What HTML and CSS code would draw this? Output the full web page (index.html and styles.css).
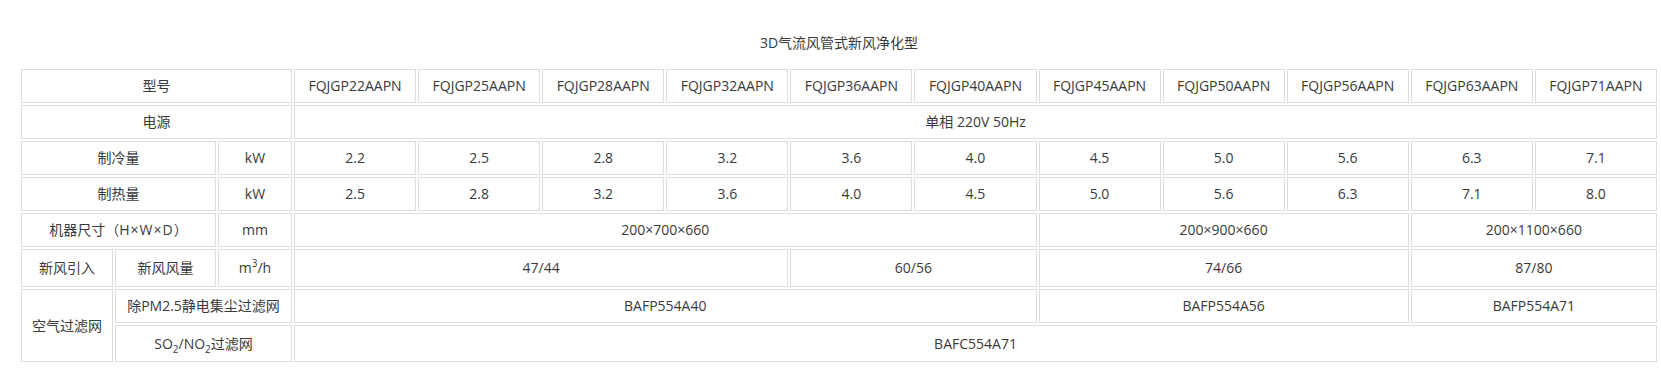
FILE: index.html
```html
<!DOCTYPE html>
<html lang="zh-CN">
<head>
<meta charset="utf-8">
<title>3D气流风管式新风净化型</title>
<link rel="stylesheet" href="styles.css">
</head>
<body>
<div class="page">
  <p class="title">3D气流风管式新风净化型</p>
  <table class="spec">
    <colgroup>
      <col class="c-a"><col class="c-b"><col class="c-c">
      <col><col><col><col><col><col><col><col><col><col><col>
    </colgroup>
    <tbody>
      <tr>
        <td colspan="3">型号</td>
        <td>FQJGP22AAPN</td><td>FQJGP25AAPN</td><td>FQJGP28AAPN</td><td>FQJGP32AAPN</td>
        <td>FQJGP36AAPN</td><td>FQJGP40AAPN</td><td>FQJGP45AAPN</td><td>FQJGP50AAPN</td>
        <td>FQJGP56AAPN</td><td>FQJGP63AAPN</td><td>FQJGP71AAPN</td>
      </tr>
      <tr>
        <td colspan="3">电源</td>
        <td colspan="11">单相 220V 50Hz</td>
      </tr>
      <tr>
        <td colspan="2">制冷量</td><td>kW</td>
        <td>2.2</td><td>2.5</td><td>2.8</td><td>3.2</td><td>3.6</td><td>4.0</td>
        <td>4.5</td><td>5.0</td><td>5.6</td><td>6.3</td><td>7.1</td>
      </tr>
      <tr>
        <td colspan="2">制热量</td><td>kW</td>
        <td>2.5</td><td>2.8</td><td>3.2</td><td>3.6</td><td>4.0</td><td>4.5</td>
        <td>5.0</td><td>5.6</td><td>6.3</td><td>7.1</td><td>8.0</td>
      </tr>
      <tr>
        <td colspan="2">机器尺寸（<span class="dims">H×W×D</span>）</td><td>mm</td>
        <td colspan="6">200×700×660</td>
        <td colspan="3">200×900×660</td>
        <td colspan="2">200×1100×660</td>
      </tr>
      <tr class="r-air">
        <td>新风引入</td><td>新风风量</td><td>m<sup>3</sup>/h</td>
        <td colspan="4">47/44</td>
        <td colspan="2">60/56</td>
        <td colspan="3">74/66</td>
        <td colspan="2">87/80</td>
      </tr>
      <tr>
        <td rowspan="2" class="c-span">空气过滤网</td>
        <td colspan="2">除PM2.5静电集尘过滤网</td>
        <td colspan="6">BAFP554A40</td>
        <td colspan="3">BAFP554A56</td>
        <td colspan="2">BAFP554A71</td>
      </tr>
      <tr class="r-so">
        <td colspan="2">SO<sub>2</sub>/NO<sub>2</sub>过滤网</td>
        <td colspan="11">BAFC554A71</td>
      </tr>
    </tbody>
  </table>
</div>
</body>
</html>
```
FILE: styles.css
```css
html, body {
  margin: 0;
  padding: 0;
  background: #ffffff;
}

.page {
  padding: 33px 0 0 19px;
  font-family: "Open Sans", "Noto Sans CJK SC", sans-serif;
  color: #3a3a3a;
}

.title {
  width: 1640px;
  margin: 0 0 14px 0;
  font-size: 14px;
  line-height: 20px;
  text-align: center;
}

.spec {
  width: 1640px;
  table-layout: fixed;
  border-collapse: separate;
  border-spacing: 2px;
  font-size: 14px;
}

.spec col.c-a { width: 92px; }
.spec col.c-b { width: 101px; }
.spec col.c-c { width: 74px; }

.spec td {
  box-sizing: border-box;
  height: 34px;
  padding: 0;
  border: 1px solid #dddddd;
  text-align: center;
  vertical-align: middle;
  white-space: nowrap;
  line-height: 20px;
}

.spec .r-air td { height: 38px; }
.spec .r-so td { height: 37px; }
.spec td.c-span { height: auto; }

.spec .dims { letter-spacing: 1px; }

.spec sup,
.spec sub {
  font-size: 10px;
  line-height: 0;
}
```
